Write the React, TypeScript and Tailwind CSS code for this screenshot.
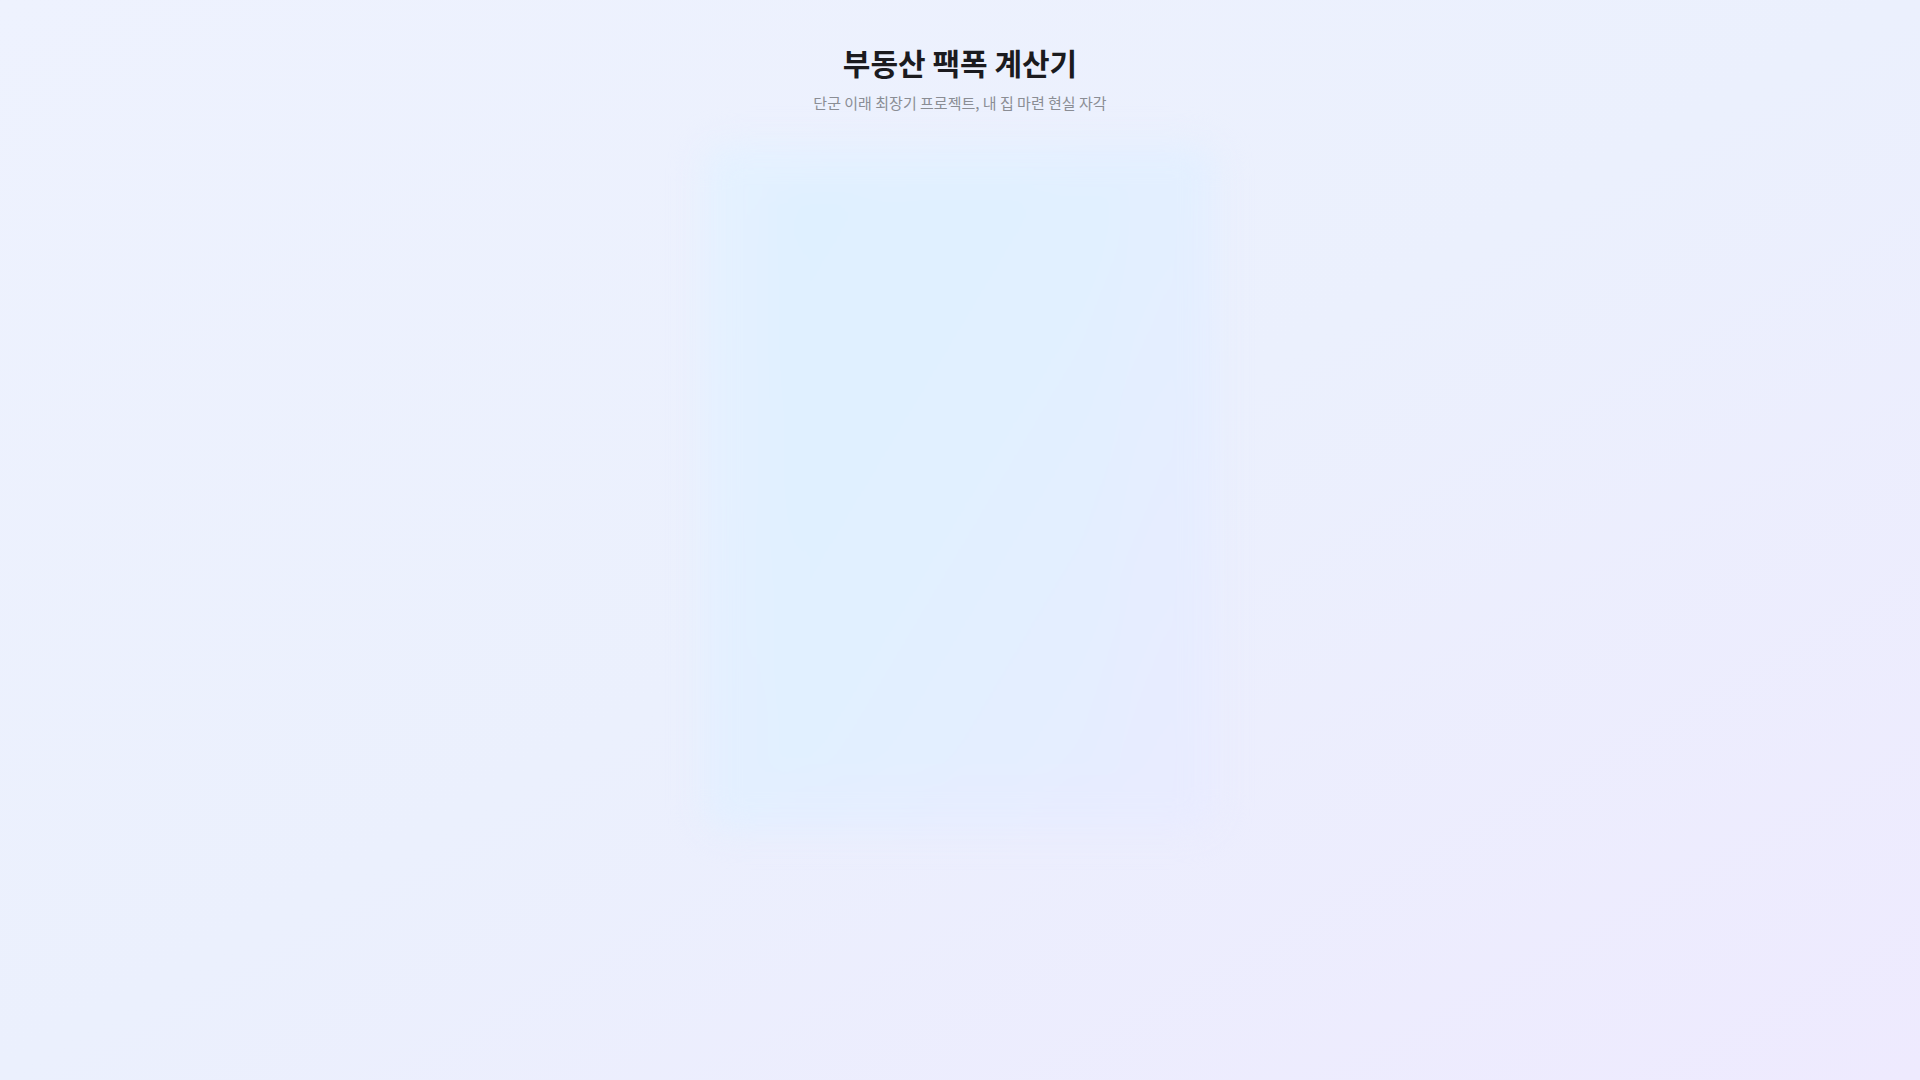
import React from 'react';

// Page shell: title + blurred card placeholder (content still fading in)

export default function App() {
  return (
    <div
      className="min-h-screen w-full bg-linear-to-br from-[#eef2fe] via-[#ebf0fd] to-[#eeeafe] flex flex-col items-center"
      style={{ fontFamily: '"Noto Sans CJK KR", "Noto Sans", sans-serif' }}
    >
      <header className="pt-[44px] flex flex-col items-center">
        <h1 className="text-[30px] leading-9 font-bold text-[#1b1b1f]">부동산 팩폭 계산기</h1>
        <p className="mt-[13px] text-[15px] leading-5 text-[#8a8d94]">단군 이래 최장기 프로젝트, 내 집 마련 현실 자각</p>
      </header>

      <main className="mt-8 w-[512px] h-[686px] blur-lg">
        <div className="w-full h-full rounded-3xl bg-linear-to-br from-[#e4f1ff] via-[#e3efff] to-[#e9ebff] pt-10 pb-14 pl-16 pr-24 flex">
          <div className="flex-1 rounded-2xl bg-linear-to-br from-[#dff0ff] via-[#e1f0ff] to-[#e6edff]" />
        </div>
      </main>
    </div>
  );
}
